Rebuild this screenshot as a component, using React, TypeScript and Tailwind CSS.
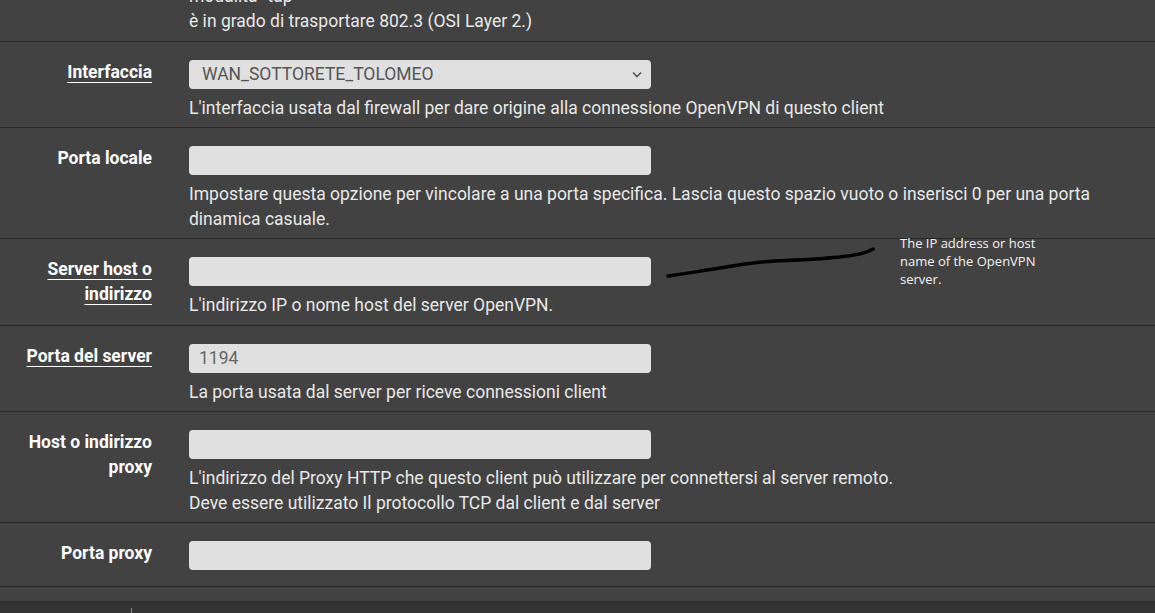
import React from 'react';

type Row = {
  label: string[];
  link?: boolean;
  value?: string;
  select?: boolean;
  help?: string[];
  tall?: boolean;
};

const rows: Row[] = [
  {
    label: ['Interfaccia'],
    link: true,
    select: true,
    value: 'WAN_SOTTORETE_TOLOMEO',
    help: ["L'interfaccia usata dal firewall per dare origine alla connessione OpenVPN di questo client"],
  },
  {
    label: ['Porta locale'],
    help: [
      'Impostare questa opzione per vincolare a una porta specifica. Lascia questo spazio vuoto o inserisci 0 per una porta dinamica casuale.',
    ],
  },
  {
    label: ['Server host o', 'indirizzo'],
    link: true,
    tall: true,
    help: ["L'indirizzo IP o nome host del server OpenVPN."],
  },
  {
    label: ['Porta del server'],
    link: true,
    value: '1194',
    help: ['La porta usata dal server per riceve connessioni client'],
  },
  {
    label: ['Host o indirizzo', 'proxy'],
    help: [
      "L'indirizzo del Proxy HTTP che questo client può utilizzare per connettersi al server remoto.",
      'Deve essere utilizzato Il protocollo TCP dal client e dal server',
    ],
  },
  {
    label: ['Porta proxy'],
  },
];

function Field({ row }: { row: Row }) {
  const pad = row.help ? (row.tall ? 'pb-[7px]' : 'pb-[6px]') : 'pb-[16px]';
  return (
    <div className={`flex border-b border-[#262626] pt-[18px] ${pad}`}>
      <div className="w-[152px] shrink-0 text-right text-[17.5px] font-bold leading-[25px] text-white">
        {row.label.map((l, i) => (
          <div key={i}>
            <span className={row.link ? 'underline decoration-1 underline-offset-[4px]' : ''}>{l}</span>
          </div>
        ))}
      </div>
      <div className="ml-[37px] w-[930px]">
        {row.select ? (
          <div className="flex h-[29px] w-[462px] items-center justify-between rounded-[4px] bg-[#e0e0e0] pl-[13px] pr-[9px] text-[17.5px] text-[#555]">
            <span>{row.value}</span>
            <svg width="10" height="7" viewBox="0 0 10 7" fill="none">
              <path d="M1 1.5 L5 5.5 L9 1.5" stroke="#555" strokeWidth="1.6" />
            </svg>
          </div>
        ) : (
          <div className="flex h-[29px] w-[462px] items-center rounded-[4px] bg-[#e0e0e0] px-[10px] text-[17.5px] text-[#666]">
            {row.value}
          </div>
        )}
        {row.help && (
          <div className="mt-[7px] text-[17.5px] leading-[25px] text-[#e8e8e8]">
            {row.help.map((h, i) => (
              <div key={i}>{h}</div>
            ))}
          </div>
        )}
      </div>
    </div>
  );
}

export default function App() {
  return (
    <div
      className="relative h-[613px] w-[1155px] overflow-hidden bg-[#424242]"
      style={{ fontFamily: 'Roboto, "Liberation Sans", sans-serif' }}
    >
      {/* tail of the previous field */}
      <div className="flex border-b border-[#262626] pb-[7px]">
        <div className="w-[152px] shrink-0" />
        <div className="-mt-[16px] ml-[37px] text-[17.5px] leading-[25px] text-[#e8e8e8]">
          <div>modalità "tap"</div>
          <div>è in grado di trasportare 802.3 (OSI Layer 2.)</div>
        </div>
      </div>

      {rows.map((r, i) => (
        <Field key={i} row={r} />
      ))}

      <div className="h-[15px] border-b border-[#2e2e2e]" />
      <div className="flex h-[20px] bg-[#333333]">
        <div className="ml-[131px] mt-[6px] h-[10px] w-px bg-[#888]" />
      </div>

      {/* hand-drawn note */}
      <svg className="absolute left-[660px] top-[244px]" width="220" height="40" viewBox="0 0 220 40" fill="none">
        <path
          d="M8 32 C25 30 40 27 60 24 C80 21 95 18 115 17 C140 16 160 15 180 13 C195 11 205 10 213 5"
          stroke="#000"
          strokeWidth="3.5"
          strokeLinecap="round"
        />
      </svg>
      <div
        className="absolute left-[900px] top-[234px] w-[150px] text-[13px] leading-[18px] text-[#f2f2f2]"
        style={{ fontFamily: '"Open Sans", "Noto Sans", sans-serif' }}
      >
        The IP address or host name of the OpenVPN server.
      </div>
    </div>
  );
}
